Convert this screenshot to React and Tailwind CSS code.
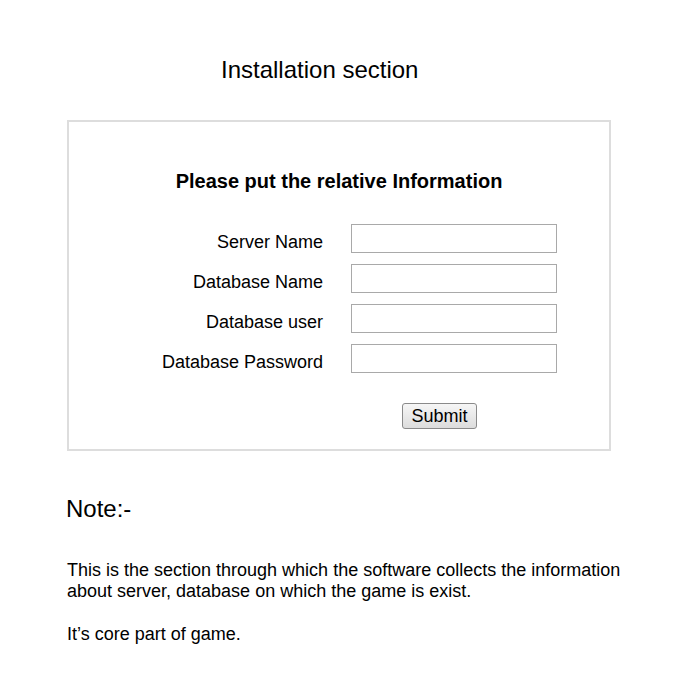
const fields = ["Server Name", "Database Name", "Database user", "Database Password"]

export default function App() {
  return (
    <div className="min-h-[700px] bg-white text-black font-['Liberation_Sans',Arial,sans-serif]">
      <div className="pt-[56px] pl-[221px] text-[24px] leading-[28px]">Installation section</div>

      {/* install form box */}
      <div className="ml-[67px] mt-[36px] w-[544px] h-[331px] border-2 border-[#dddddd]">
        <div className="mt-[47px] text-center text-[20px] leading-[24px] font-bold">
          Please put the relative Information
        </div>
        <div className="mt-[31px] flex flex-col gap-[11px]">
          {fields.map((label) => (
            <div key={label} className="flex items-start h-[29px]">
              <label className="w-[254px] h-[29px] text-right text-[18px] leading-[37px]">{label}</label>
              <input
                type={label.includes("Password") ? "password" : "text"}
                className="ml-[28px] w-[206px] h-[29px] border border-[#a9a9a9] bg-white"
              />
            </div>
          ))}
        </div>
        <div className="mt-[30px] pl-[333px]">
          <button className="w-[75px] h-[26px] text-[18px] leading-[22px] border border-[#8a8a8a] rounded-[3px] bg-gradient-to-b from-[#f6f6f6] to-[#dcdcdc]">
            Submit
          </button>
        </div>
      </div>

      <div className="ml-[66px] mt-[44px] text-[24px] leading-[28px]">Note:-</div>
      <div className="ml-[67px] mt-[37px] w-[570px] text-[18px] leading-[21px]">
        <p>This is the section through which the software collects the information about server, database on which the game is exist.</p>
        <p className="mt-[22px]">It’s core part of game.</p>
      </div>
    </div>
  )
}
